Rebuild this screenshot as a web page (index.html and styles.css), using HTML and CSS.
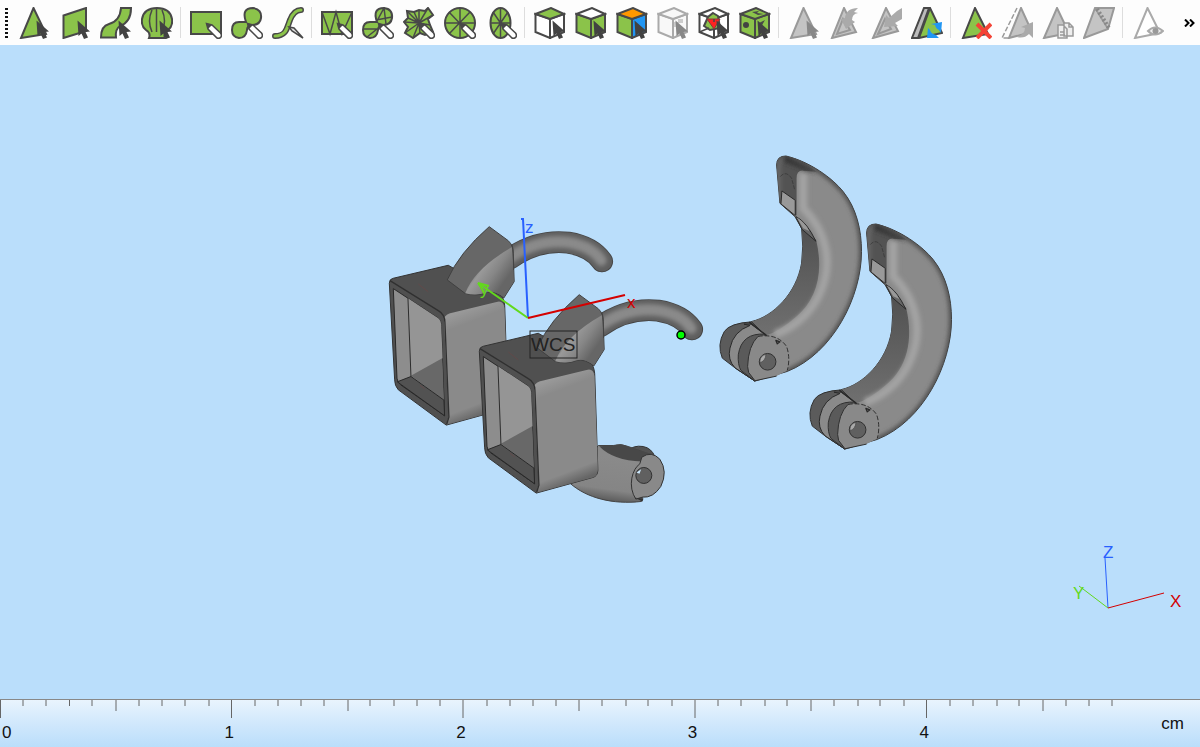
FILE: index.html
```html
<!DOCTYPE html>
<html lang="en">
	<head>
		<meta charset="UTF-8" />
		<meta name="viewport" content="width=device-width, initial-scale=1.0" />
		<title>Model viewer</title>
		<link rel="stylesheet" href="styles.css">
	</head>
	<body>
		<!-- shared icon parts -->
		<svg class="defs" aria-hidden="true">
			<defs>
				<path id="cursor" d="M18.500 13.500L19.500 29L22.500 26.500L25 32L29 30.500L26.500 25L31 24.500Z" />
				<g id="pencil">
					<path d="M16.500 16.500L18 22L27 31Q29.500 32 31 30Q32 28 30.500 26L22 18Z" fill="#fff" stroke="#484848" stroke-width="1.500" />
					<path d="M16 16L18 22L22 18Z" fill="#484848" />
				</g>
				<path id="tri" d="M15.500 1L28 27L3 31Z" />
				<path id="blobs" d="M15 15Q10 1 22 1Q31 2 30 11Q29 18 21 18Q16 19 16 23Q15 31 8 31Q1 30 1 23Q1 15 8 15Z" />
				<path id="top" d="M1.500 7L17 1L30 7L16 12Z" />
				<path id="left" d="M1.500 7L16 12V31L1.500 25Z" />
				<path id="right" d="M16 12L30 7V25L16 31Z" />
			</defs>
		</svg>

		<header class="toolbar" role="toolbar" aria-label="Marking">
			<span class="grip"></span>
			<button type="button" aria-label="Mark triangle"><svg class="icon" viewBox="0 0 32 32"><use href="#tri" class="green" /><use href="#cursor" class="dark" /></svg></button>
			<button type="button" aria-label="Mark plane"><svg class="icon" viewBox="0 0 32 32"><path class="green" d="M4.500 8.500L27 1V24L4.500 31Z" /><use href="#cursor" class="dark" /></svg></button>
			<button type="button" aria-label="Mark surface"><svg class="icon" viewBox="0 0 32 32"><path class="green" d="M1 30.500Q1 19 9 17Q20 14 21 1H31Q31 15 20 19Q15 22 16 30.500Z" /><use href="#cursor" class="dark" /></svg></button>
			<button type="button" aria-label="Mark shell"><svg class="icon" viewBox="0 0 32 32"><path class="green" d="M8 31Q10 26 5 23Q0 19 1 12Q3 1 16 1Q29 1 31 12Q32 19 27 23Q22 26 24 31Z" /><path class="line" d="M11 3Q6 14 11 25M15.500 1V25M21 3Q26 14 21 25" /><use href="#cursor" class="dark" /></svg></button>
			<span class="separator"></span>
			<button type="button" aria-label="Rectangle mark"><svg class="icon" viewBox="0 0 32 32"><path class="green" d="M1 5H31V27H1Z" /><use href="#pencil" /></svg></button>
			<button type="button" aria-label="Freeform mark"><svg class="icon" viewBox="0 0 32 32"><use href="#blobs" class="green" /><use href="#pencil" /></svg></button>
			<button type="button" aria-label="Line mark"><svg class="icon" viewBox="0 0 32 32"><path d="M3 29C15 29 15 20 18 13Q22 3 29 3" fill="none" stroke="#484848" stroke-width="6" stroke-linecap="round" /><path d="M3 29C15 29 15 20 18 13Q22 3 29 3" fill="none" stroke="#8bc34a" stroke-width="3" stroke-linecap="round" /><path d="M17 20L22 21L31 31L20 24Z" fill="#ddd" stroke="#484848" stroke-width="1.500" /></svg></button>
			<span class="separator"></span>
			<button type="button" aria-label="Rectangle triangles"><svg class="icon" viewBox="0 0 32 32"><path class="green" d="M1 5H31V27H1Z" /><path class="line" d="M1 5L9 27L15 5L21 27L31 5" /><use href="#pencil" /></svg></button>
			<button type="button" aria-label="Freeform triangles"><svg class="icon" viewBox="0 0 32 32"><use href="#blobs" class="green" /><path class="line" d="M1 22H15L5 30M15 14L22 1L24 17M30 10L14 13" /><use href="#pencil" /></svg></button>
			<button type="button" aria-label="Star triangles"><svg class="icon" viewBox="0 0 32 32"><path class="green" d="M4 4L11 5L16 3L22 4L25 1L30 8L25 12L27 18L30 25L22 28L17 26L10 31L2 26L5 20L1 15L5 11Z" /><path class="line" d="M16 16L4 4M16 16L11 5M16 16V3M16 16L25 1M16 16L30 8M16 16L27 18M16 16L30 25M16 16L17 27M16 16L10 31M16 16L2 26M16 16L1 15M16 16L5 11" /><use href="#pencil" /></svg></button>
			<button type="button" aria-label="Circle triangles"><svg class="icon" viewBox="0 0 32 32"><circle class="green" cx="16" cy="16" r="15" /><path class="line" d="M16 1V31M1 16H31M5 5L26 27M26 5L5 27" /><use href="#pencil" /></svg></button>
			<button type="button" aria-label="Ellipse triangles"><svg class="icon" viewBox="0 0 32 32"><ellipse class="green" cx="15.500" cy="16" rx="10" ry="15" /><path class="line" d="M15.500 1V31M5.500 16H26M8 5L23 27M23 5L8 27" /><use href="#pencil" /></svg></button>
			<span class="separator"></span>
			<button type="button" aria-label="Mark top face"><svg class="icon" viewBox="0 0 32 32"><g class="white"><use href="#left" /><use href="#right" /></g><use href="#top" class="green" /><use href="#cursor" class="dark" /></svg></button>
			<button type="button" aria-label="Mark side faces"><svg class="icon" viewBox="0 0 32 32"><g class="green"><use href="#left" /><use href="#right" /></g><use href="#top" class="white" /><use href="#cursor" class="dark" /></svg></button>
			<button type="button" aria-label="Mark by colour"><svg class="icon" viewBox="0 0 32 32"><g class="green"><use href="#left" /><use href="#right" fill="#2196f3" /><use href="#top" fill="#ff9800" /></g><use href="#cursor" class="dark" /></svg></button>
			<button type="button" aria-label="Mark body" disabled><svg class="icon" viewBox="0 0 32 32"><g fill="#f8f8f8" stroke="#aaa" stroke-width="2"><use href="#left" /><use href="#right" /><use href="#top" /></g><path d="M17 15H21V20H17ZM21 20H26V25H21ZM21 12H26V16H21Z" fill="#ccc" /><use href="#cursor" class="dim" /></svg></button>
			<button type="button" aria-label="Mark inner shell"><svg class="icon" viewBox="0 0 32 32"><g class="white"><use href="#left" /><use href="#right" /><use href="#top" /></g><path class="green" d="M15 6L20 9L22 21L12 23L6 19L10 10Z" /><path d="M9 12H22L16 22Z" fill="#f22" stroke="#843c3c" /><path class="line" d="M1.500 25L11 21M16 12V15" /><use href="#cursor" class="dark" /></svg></button>
			<button type="button" aria-label="Mark all"><svg class="icon" viewBox="0 0 32 32"><g class="green"><use href="#left" /><use href="#right" /><use href="#top" /></g><path d="M13 5L20 4L18 6L25 7L19 8ZM20 16L26 13L22 20Z" fill="#484848" /><circle cx="7" cy="18" r="3" class="dark" /><use href="#cursor" class="dark" /></svg></button>
			<span class="separator"></span>
			<button type="button" aria-label="Unmark" disabled><svg class="icon" viewBox="0 0 32 32"><use href="#tri" class="gray" /><use href="#cursor" class="dim" /></svg></button>
			<button type="button" aria-label="Shrink marked" disabled><svg class="icon" viewBox="0 0 32 32"><path class="gray" d="M15 1L27 25L3 31Z" /><path class="gray" d="M14 12L21 23L8 27Z" /><path d="M12 12L16 11Q17 1 29 1L25 5L29 6Q23 7 23 13L26 15L17 22Z" fill="#aaa" /></svg></button>
			<button type="button" aria-label="Grow marked" disabled><svg class="icon" viewBox="0 0 32 32"><path class="gray" d="M16 1L28 24L3 31Z" /><path class="gray" d="M15 12L21 22L8 27Z" /><path d="M14 20L16 8L19 11L27 4L32 1V12L25 16L28 19Z" fill="#aaa" /></svg></button>
			<button type="button" aria-label="Invert marked"><svg class="icon" viewBox="0 0 32 32"><path d="M13 1H18L7 31H1Z" fill="#bbb" stroke="#484848" stroke-width="2" /><path class="green" d="M19 1L31 26L8 31Z" /><path d="M20 17L31 15L30 26L28 23Q25 22 24 18ZM17 21L19 23Q20 27 25 28L28 31L16 31Z" fill="#2196f3" /></svg></button>
			<span class="separator"></span>
			<button type="button" aria-label="Delete marked"><svg class="icon" viewBox="0 0 32 32"><path class="green" d="M15 1L28 27L3 31Z" /><path d="M17 17L31 31M31 17L17 31" fill="none" stroke="#f44336" stroke-width="4" /></svg></button>
			<button type="button" aria-label="Move marked" disabled><svg class="icon" viewBox="0 0 32 32"><path class="gray" d="M20 1L31 25L8 31Z" /><path class="line pale" stroke-dasharray="5 2" d="M16 1L1 31H8" /><path d="M16 30Q24 27 24 21L20 20L32 15V31L28 27Q23 32 16 30Z" fill="#aaa" /></svg></button>
			<button type="button" aria-label="Copy marked" disabled><svg class="icon" viewBox="0 0 32 32"><path class="gray" d="M15 1L27 26L2 31Z" /><path fill="#eee" stroke="#999" stroke-width="1.500" d="M22 16H27L31 20V29H22ZM16 18H21L25 22V31H16ZM18 25H22M18 28H23M27 16V20H31" /></svg></button>
			<button type="button" aria-label="Bridge marked" disabled><svg class="icon" viewBox="0 0 32 32"><path class="gray" d="M12 1H31L25 22L1 31Z" /><path class="line pale" d="M12 1L25 22" /><path d="M14 2L26 21" fill="none" stroke="#888" stroke-width="4" stroke-dasharray="2 2" /></svg></button>
			<span class="separator"></span>
			<button type="button" aria-label="Hide marked" disabled><svg class="icon" viewBox="0 0 32 32"><path d="M15.500 1L28 26L3 31Z" fill="#fff" stroke="#aaa" stroke-width="2" /><path d="M16 24Q23 17 31 24Q23 31 16 24Z" fill="#eee" stroke="#aaa" stroke-width="2" /><circle cx="23.500" cy="24" r="3" fill="#999" /></svg></button>
			<button type="button" class="more" aria-label="More tools">
				<svg viewBox="0 0 12 8"><path d="M1 0.500L4.500 4L1 7.500M6 0.500L9.500 4L6 7.500" fill="none" stroke="#000" stroke-width="2" /></svg>
			</button>
		</header>

		<main class="viewport">
			<svg class="scene" viewBox="0 45 1200 654" role="img" aria-label="3D model">
				<defs>
					<linearGradient id="side" x1="0" y1="0" x2="0.200" y2="1">
						<stop offset="0" stop-color="#5c5c5c" />
						<stop offset="0.120" stop-color="#9a9a9a" />
						<stop offset="0.240" stop-color="#8a8a8a" />
						<stop offset="0.900" stop-color="#8a8a8a" />
						<stop offset="1" stop-color="#666" />
					</linearGradient>
					<linearGradient id="neck" x1="0.250" y1="0.300" x2="0.800" y2="0.700">
						<stop offset="0" stop-color="#686868" />
						<stop offset="0.250" stop-color="#999" />
						<stop offset="0.600" stop-color="#868686" />
						<stop offset="1" stop-color="#666" />
					</linearGradient>
					<linearGradient id="inside" x1="0" y1="0" x2="0" y2="1">
						<stop offset="0" stop-color="#505050" />
						<stop offset="1" stop-color="#707070" />
					</linearGradient>
					<linearGradient id="horn" x1="0.500" y1="0" x2="0.300" y2="1">
						<stop offset="0.200" stop-color="#8a8a8a" />
						<stop offset="0.750" stop-color="#858585" />
						<stop offset="1" stop-color="#505050" />
					</linearGradient>
					<filter id="soft" x="-50%" y="-80%" width="200%" height="260%"><feGaussianBlur stdDeviation="6" /></filter>
					<clipPath id="arm-clip">
						<path d="M230 75Q230 48 258 48C330 65 398 115 430 155C470 205 485 270 485 335C485 470 400 640 262 695L165 724L115 690L155 545C220 530 290 460 305 370Q312 320 305 265L285 230L240 190Z" />
					</clipPath>

					<g id="bracket" stroke-linejoin="round">
						<g fill="none" stroke-linecap="round">
							<path d="M420 146C480 103 540 92 595 98C650 107 680 130 697 154" stroke="#444" stroke-width="66" />
							<path d="M420 146C480 103 540 92 595 98C650 107 680 130 697 154" stroke="#5e5e5e" stroke-width="61" />
							<path d="M420 144C480 101 540 91 595 97C650 106 680 129 694 151" stroke="#8a8a8a" stroke-width="34" filter="url(#soft)" />
						</g>
						<path d="M58 220Q58 207 70 205L235 166L395 258Q405 270 405 300L414 578Q413 595 399 599L229 646L85 540Q74 528 74 510Z" fill="#505050" stroke="#333" stroke-width="3" />
						<path d="M222 325Q228 312 250 308L380 276Q401 270 404 295L414 575Q413 595 399 599L229 645L236 620Z" fill="url(#side)" />
						<path d="M70 236L205 325Q214 332 214 350L224 618L92 525Q82 518 81 505Z" fill="#8d8d8d" stroke="#282828" stroke-width="3" />
						<path d="M114 265L205 325Q214 332 214 350L218 445L123 498Z" fill="#959595" />
						<path d="M123 498L217 445L222 571Z" fill="#686868" />
						<path d="M82 516L123 500L222 571L224 618Z" fill="#525252" stroke="#282828" stroke-width="3" />
						<path d="M114 265L123 500" stroke="#2c2c2c" stroke-width="3" />
						<path d="M60 212L205 302Q225 313 225 338L237 622L230 644" fill="none" stroke="#303030" stroke-width="4" />
						<path d="M145 222L175 246M150 526L164 537" stroke="#843c3c" stroke-width="1" />
						<path d="M232 210Q268 128 358 50L415 92Q430 106 430 130L433 215L402 264Q375 242 350 248Q320 261 285 250Z" fill="#676767" stroke="#3f3f3f" stroke-width="3" />
						<path d="M426 112L432 215L402 262Q375 240 350 247Q320 259 286 250Q315 175 426 112Z" fill="url(#neck)" />
						<path d="M426 102Q432 118 431 180" fill="none" stroke="#444" stroke-width="3" />
					</g>

					<g id="arm" stroke-linejoin="round">
						<path d="M230 75Q230 48 258 48C330 65 398 115 430 155C470 205 485 270 485 335C485 470 400 640 262 695L165 724L115 690L155 545C220 530 290 460 305 370Q312 320 305 265L285 230L240 190Z" fill="#8a8a8a" stroke="#3a3a3a" stroke-width="3" />
						<g clip-path="url(#arm-clip)">
							<path d="M258 48C330 65 398 115 430 155C470 205 485 270 485 335C485 470 400 640 262 695" fill="none" stroke="#4c4c4c" stroke-width="14" filter="url(#soft)" />
							<path d="M306 262L349 300C372 400 350 480 290 530Q240 575 195 588L140 555Z" fill="url(#inside)" />
							<path d="M310 100V205Q365 260 378 330C395 430 340 540 225 584" fill="none" stroke="#a3a3a3" stroke-width="24" filter="url(#soft)" />
							<path d="M225 40H275L350 95L310 92Q290 90 290 115V227L230 190Z" fill="#535353" />
							<path d="M256 46L350 98L320 92L244 62Z" fill="#353535" filter="url(#soft)" />
							<path d="M237 185V85Q237 58 252 55" fill="none" stroke="#777" stroke-width="7" filter="url(#soft)" />
						</g>
						<path d="M241 110Q258 90 275 115L284 148" fill="none" stroke="#333" stroke-width="2" stroke-dasharray="12 4" />
						<path d="M246 153L286 181V227L243 192Z" fill="#999" stroke="#292929" stroke-width="3" />
						<path d="M288 230Q320 245 348 304L306 268Z" fill="#666" stroke="#292929" stroke-width="3" />
						<path d="M290 232Q316 248 328 273L310 265Z" fill="#999" />
						<path d="M155 546Q90 550 73 575Q50 615 67 655L110 688L165 724L200 590Z" fill="#5b5b5b" stroke="#303030" stroke-width="3" />
						<path d="M132 553H154L200 588L165 724L105 684Q82 660 90 625Q100 575 150 557Z" fill="#8a8a8a" stroke="#292929" stroke-width="3" />
						<path d="M196 583Q125 578 115 645Q113 675 123 692L165 724Z" fill="#5a5a5a" stroke="#303030" stroke-width="3" />
						<path d="M143 680Q145 618 174 590Q232 580 260 620Q272 655 262 692L230 709L165 723L146 698Z" fill="#898989" />
						<path d="M174 590Q145 618 143 680L146 698L165 723L230 709" fill="none" stroke="#303030" stroke-width="3" />
						<path d="M174 590Q232 580 260 620Q272 655 262 692" fill="none" stroke="#303030" stroke-width="3" stroke-dasharray="14 6" />
						<path d="M148 547L200 587M228 602L240 606L232 612Z" fill="none" stroke="#292929" stroke-width="4" />
						<circle cx="203" cy="666" r="25" fill="#606060" stroke="#303030" stroke-width="3" />
						<path d="M180 663Q182 646 198 644Q197 662 181 669Z" fill="#aaa" stroke="#444" stroke-width="2" />
					</g>
				</defs>

				<use href="#bracket" transform="translate(370 210) scale(0.333)" />

				<!-- lower hinge -->
				<g transform="translate(470 280) scale(0.333)" stroke-linejoin="round">
					<path d="M472 515Q490 495 520 500Q545 505 555 530L500 600Z" fill="#525252" stroke="#333" stroke-width="3" />
					<path d="M385 497L430 497Q455 490 475 500L545 525L515 665C430 675 350 655 300 610Z" fill="url(#horn)" stroke="#444" stroke-width="3" />
					<path d="M388 499L430 497Q455 490 475 500L545 523L516 545Q430 542 388 499Z" fill="#484848" />
					<path d="M516 532Q545 512 570 538Q595 575 573 620Q550 655 518 652L498 658Q480 630 486 595Q492 565 510 552Z" fill="#898989" stroke="#333" stroke-width="3" />
					<path d="M495 654L521 656L518 665Z" fill="#333" />
					<circle cx="522" cy="587" r="24" fill="#606060" stroke="#303030" stroke-width="3" />
					<path d="M500 578L514 568L509 582Z" fill="#cdeaff" />
				</g>

				<use href="#bracket" transform="translate(460 278) scale(0.333)" />
				<use href="#arm" transform="translate(700 140) scale(0.333)" />
				<use href="#arm" transform="translate(790 208) scale(0.333)" />

				<!-- work coordinate system -->
				<g class="axes">
					<path class="axis-z" d="M528 318L523 219H521" />
					<path class="axis-y" d="M528 318L478 283L489 286M478 283L484 292" />
					<path class="axis-x" d="M528 318L625 295" />
					<text class="axis-label z" x="525" y="233">z</text>
					<text class="axis-label y" x="480" y="295">y</text>
					<text class="axis-label x" x="627" y="308">x</text>
				</g>
				<rect class="tag" x="530" y="331" width="47" height="27" />
				<text class="tag-text" x="531" y="351">WCS</text>
				<circle cx="681" cy="335" r="4" fill="#0f0" stroke="#000" stroke-width="1.500" />

				<!-- orientation triad -->
				<g class="triad">
					<path class="axis-z" d="M1108 608L1105 558" />
					<path class="axis-y" d="M1108 608L1083 589L1079 586" />
					<path class="axis-x" d="M1108 608L1164 593" />
					<text class="triad-label z" x="1103" y="558">Z</text>
					<text class="triad-label y" x="1073" y="599">Y</text>
					<text class="triad-label x" x="1170" y="607">X</text>
				</g>
			</svg>
		</main>

		<footer class="ruler">
			<svg class="ticks" viewBox="0 0 1200 18" preserveAspectRatio="none" aria-hidden="true">
				<path d="M0.500 0V18M231.500 0V18M463 0V18M695 0V18M926.500 0V18" />
				<path d="M116 0V11M348 0V11M579 0V11M811 0V11M1043 0V11" />
				<path d="M23 0V6M46 0V6M69.500 0V6M92 0V6M139 0V6M162 0V6M185 0V6M209 0V6M255 0V6M278 0V6M301 0V6M324 0V6M370 0V6M394 0V6M417 0V6M440 0V6M487 0V6M510 0V6M533 0V6M556 0V6M602 0V6M626 0V6M648 0V6M672 0V6M718 0V6M741 0V6M765 0V6M787 0V6M834 0V6M858 0V6M880 0V6M904 0V6M950 0V6M973 0V6M997 0V6M1019 0V6M1066 0V6M1089 0V6M1112 0V6" />
			</svg>
			<div class="scale">
				<ol class="numbers">
					<li>0</li>
					<li>1</li>
					<li>2</li>
					<li>3</li>
					<li>4</li>
				</ol>
				<span class="unit">cm</span>
			</div>
		</footer>
	</body>
</html>
```
FILE: styles.css
```css
body {
	margin: 0;
	height: 100vh;
	display: flex;
	flex-direction: column;
	overflow: hidden;
	background-color: #badefb;
	color: #111;
	font-family: 'Liberation Sans', Arial, sans-serif;
}
.defs {
	display: none;
}

/* toolbar */
.toolbar {
	display: flex;
	align-items: center;
	height: 45px;
	padding-left: 5px;
	background-color: #fdfdfd;
}
.toolbar button {
	flex: none;
	display: flex;
	justify-content: center;
	align-items: center;
	width: 41px;
	height: 45px;
	padding: 0;
	border: none;
	background: none;
	cursor: pointer;
}
.toolbar button:disabled {
	cursor: default;
}
.grip {
	flex: none;
	width: 3px;
	height: 30px;
	margin-right: 5px;
	background: repeating-linear-gradient(#111 0 2px, transparent 2px 4px);
}
.separator {
	flex: none;
	width: 1px;
	height: 31px;
	margin: 0 4px 0 3px;
	background-color: #ddd;
}
.icon {
	width: 32px;
	height: 32px;
}
.toolbar .more {
	width: 20px;
	margin-left: auto;
}
.more svg {
	width: 12px;
	height: 8px;
}
.green {
	fill: #8bc34a;
	stroke: #484848;
	stroke-width: 2px;
}
.white {
	fill: #fff;
	stroke: #484848;
	stroke-width: 2px;
}
.gray {
	fill: #c4c4c4;
	stroke: #999;
	stroke-width: 2px;
}
.dark {
	fill: #424242;
}
.dim {
	fill: #888;
}
.line {
	fill: none;
	stroke: #484848;
	stroke-width: 1.5px;
}
.pale {
	stroke: #999;
}

/* 3d view */
.viewport {
	flex: 1;
	min-height: 0;
}
.scene {
	display: block;
	width: 100%;
	height: 100%;
}
.axes path {
	fill: none;
	stroke-width: 2px;
}
.triad path {
	fill: none;
	stroke-width: 1px;
}
.axis-x {
	stroke: #d40000;
}
.axis-y {
	stroke: #62d91c;
}
.axis-z {
	stroke: #2860ff;
}
.x {
	fill: #d40000;
}
.y {
	fill: #62d91c;
}
.z {
	fill: #2860ff;
}
.axis-label,
.triad-label {
	font-size: 17px;
}
.tag {
	fill: none;
	stroke: #222;
	stroke-width: 1px;
}
.tag-text {
	fill: #222;
	font-size: 19px;
}

/* ruler */
.ruler {
	height: 48px;
	box-sizing: border-box;
	border-top: 1px solid #888;
	background: linear-gradient(#e9f4fd, #d3e9fc 45%, #badefb);
}
.ticks {
	display: block;
	width: 100%;
	height: 18px;
}
.ticks path {
	fill: none;
	stroke: #666;
	stroke-width: 1px;
}
.scale {
	display: flex;
	font-size: 17px;
	line-height: 20px;
}
.numbers {
	flex: 1;
	display: flex;
	margin: 5px 0 0 -7px;
	padding: 0;
	list-style: none;
}
.numbers li {
	flex: none;
	box-sizing: border-box;
	width: 19.3vw;
}
.numbers li:first-child {
	padding-left: 9px;
}
.unit {
	margin: -4px 16px 0 0;
}
```
